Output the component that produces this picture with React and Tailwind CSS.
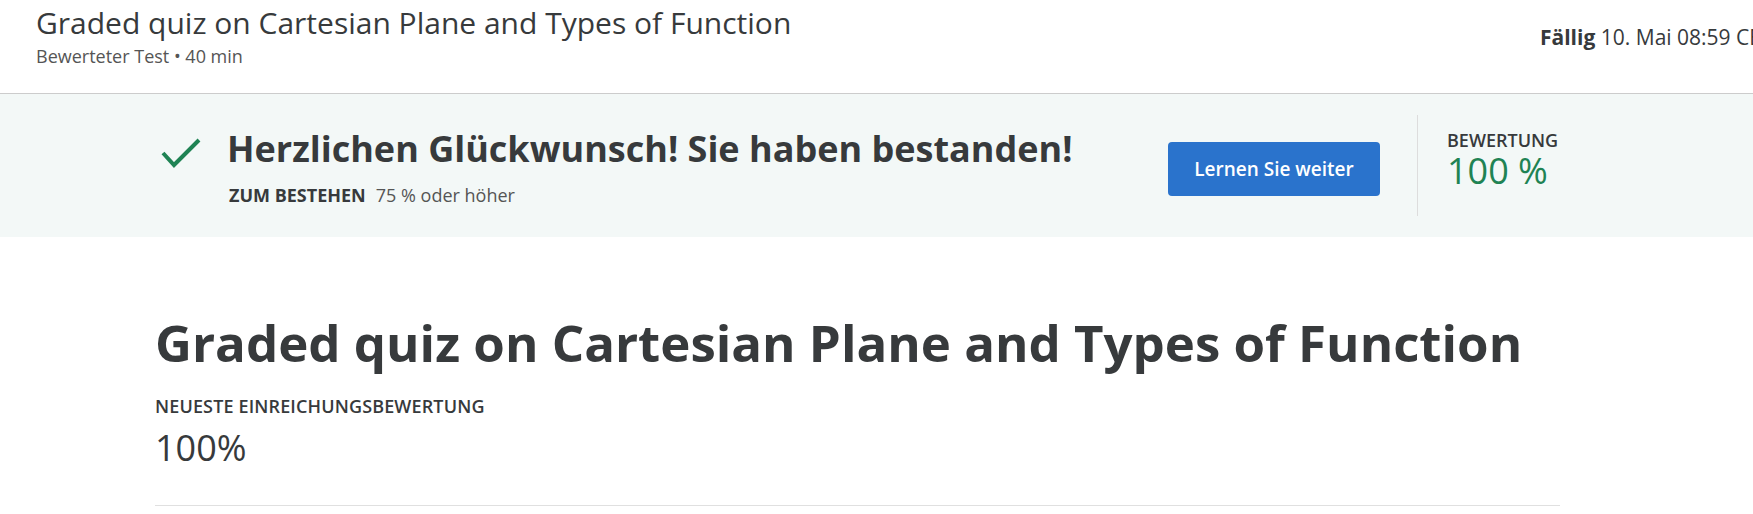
import React from 'react';

const FONT = { fontFamily: '"Open Sans", "Liberation Sans", sans-serif' };

const CheckMark = () => (
  <svg width="40" height="30" viewBox="0 0 40 30" fill="none">
    <polyline points="2,15 13,27 38,2" stroke="#1f8354" strokeWidth="4" />
  </svg>
);

const App = () => {
  return (
    <div style={FONT} className="w-[1753px] h-[514px] overflow-hidden bg-white text-[#373a3c]">
      {/* top header */}
      <div className="h-[94px] border-b border-[#cccccc] flex justify-between pl-[36px] overflow-hidden">
        <div className="pt-[5px]">
          <h2 className="text-[30px] leading-[36px] font-normal text-[#373a3c] whitespace-nowrap">
            Graded quiz on Cartesian Plane and Types of Function
          </h2>
          <div className="mt-[4px] text-[18px] leading-[22px] text-[#555555] whitespace-nowrap">
            Bewerteter Test • 40 min
          </div>
        </div>
        <div className="pt-[23px] shrink-0 w-[213px] whitespace-nowrap text-[21px] leading-[28px]">
          <span className="font-bold">Fällig</span> 10. Mai 08:59 CEST
        </div>
      </div>

      {/* passed banner */}
      <div className="bg-[#f3f8f7] py-[21px] pl-[161px]">
        <div className="w-[1399px] h-[101px] flex items-start">
          <div className="mt-[23px]">
            <CheckMark />
          </div>
          <div className="ml-[26px] mt-[12px]">
            <h3 className="text-[36px] leading-[44px] font-bold whitespace-nowrap">
              Herzlichen Glückwunsch! Sie haben bestanden!
            </h3>
            <div className="mt-[12px] text-[18px] leading-[24px] whitespace-nowrap">
              <span className="ml-[2px] font-bold uppercase">Zum Bestehen</span>
              <span className="ml-[10px] text-[#555555]">75 % oder höher</span>
            </div>
          </div>
          <button className="ml-auto mt-[27px] w-[212px] h-[54px] rounded bg-[#2a73cc] text-white text-[19px] font-semibold">
            Lernen Sie weiter
          </button>
          <div className="ml-[37px] w-px self-stretch bg-[#dddddd]" />
          <div className="ml-[29px] mt-[14px] w-[113px]">
            <div className="text-[18px] leading-[22px] font-semibold uppercase whitespace-nowrap">Bewertung</div>
            <div className="text-[36px] leading-[40px] text-[#1f8354] whitespace-nowrap">100 %</div>
          </div>
        </div>
      </div>

      {/* main */}
      <div className="pl-[155px]">
        <div className="w-[1405px]">
          <h1 className="mt-[75px] text-[51px] leading-[60px] font-bold whitespace-nowrap">
            Graded quiz on Cartesian Plane and Types of Function
          </h1>
          <div className="mt-[23px] text-[18px] leading-[22px] font-semibold uppercase tracking-[0.14px]">
            Neueste Einreichungsbewertung
          </div>
          <div className="mt-[9px] text-[36px] leading-[44px] text-[#373a3c]">100%</div>
          <div className="mt-[35px] border-b border-[#e0e0e0]" />
        </div>
      </div>
    </div>
  );
};

export default App;
